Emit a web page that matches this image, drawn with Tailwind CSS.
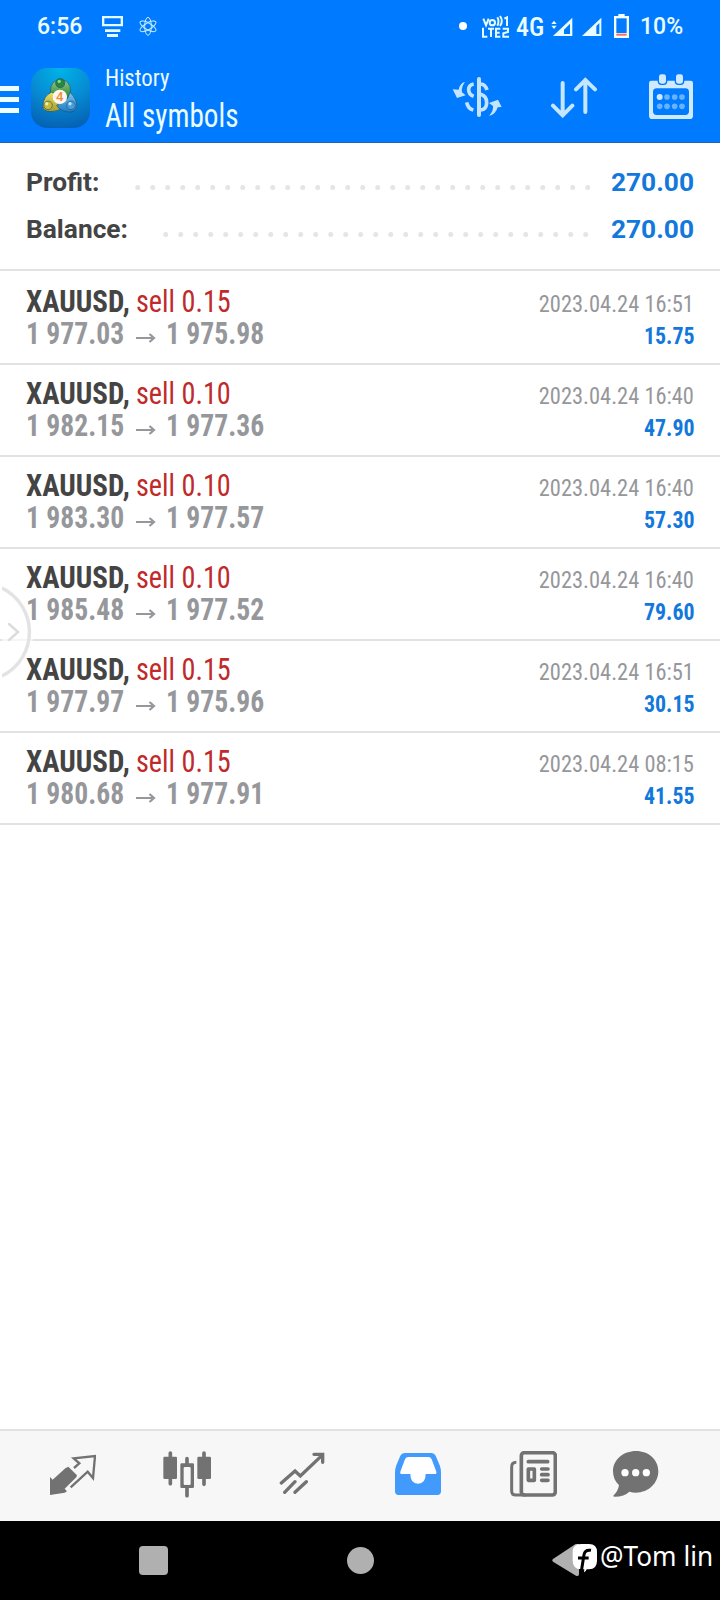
<!DOCTYPE html>
<html lang="en">
<head>
<meta charset="utf-8">
<title>History</title>
<script src="https://cdn.jsdelivr.net/npm/@tailwindcss/browser@4"></script>
</head>
<body class="bg-white">
<div class="relative flex h-[1600px] w-[720px] flex-col overflow-hidden bg-white font-['Roboto',sans-serif] text-[#444]">
  <header class="h-[143px] shrink-0 border-b border-[#1d63b8] bg-[#007aff] text-[#eafcff]">
    <div class="flex h-[54px] items-start">
      <span class="ml-[37px] mt-[11px] w-[65px] text-[23px] font-medium leading-[32px]">6:56</span>
      <svg class="mt-[16px] h-[21px] w-[21px]" viewBox="306 48 63 63" fill="#e4fbff"><path fill-rule="evenodd" d="M306 48h63v31h-63zM313 55v17h49V55z"/><path d="M315 88h46v8h-46zM321 102h33v9h-33z"/></svg>
      <svg class="ml-[16px] mt-[16px] h-[20px] w-[18px]" viewBox="417 48 54 60" fill="none" stroke="#c4edff" stroke-width="3"><ellipse cx="444" cy="79" rx="10" ry="27"/><ellipse cx="444" cy="79" rx="10" ry="27" transform="rotate(60 444 79)"/><ellipse cx="444" cy="79" rx="10" ry="27" transform="rotate(-60 444 79)"/></svg>
      <span class="ml-[302px] mt-[22px] h-2 w-2 rounded-full bg-white"></span>
      <svg class="ml-[15px] mt-[15px] h-[24px] w-[28px]" viewBox="126 45 84 72" fill="none" stroke="#e4fbff" stroke-width="6"><path d="M130 56l8 20 8-20M172 52q7 12 0 25M180 48q11 15 0 30M193 56l8-4v26M129 83v27h13M144 86h18M153 86v25M181 86h-13v24h13M168 98h11M188 86h16v10l-14 4v10h17"/><circle cx="157" cy="68" r="8"/></svg>
      <span class="ml-[6px] mt-[11px] w-[35px] text-[26px] font-medium font-stretch-condensed leading-[33px] whitespace-nowrap">4G</span>
      <svg class="mt-[17px] h-[20px] w-[52px]" viewBox="333 51 156 60" fill="#e9fcff"><path d="M342 62l8 10h-16zM334 77h16l-8 10z"/><path fill-rule="evenodd" d="M397 53v55h-58zM390 71l-18 18v13h18z"/><path fill-rule="evenodd" d="M484 53v55h-58zM478 69l-9 9v24h9z"/></svg>
      <svg class="ml-[11px] mt-[14px] h-[24px] w-[15px]" viewBox="522 42 45 72"><path d="M535 42h19v6h13v66h-45V48h13z" fill="#f4ffff"/><path d="M529 55h31v44h-31z" fill="#007aff"/><path d="M529 101h31v6h-31z" fill="#ff6a60"/></svg>
      <span class="ml-[11px] mt-[11px] text-[23px] font-medium leading-[32px]">10%</span>
    </div>
    <div class="flex h-[88px] items-start">
      <svg class="mt-[31px] h-[29px] w-[19px] shrink-0" viewBox="0 0 19 29" fill="#f0fdff"><path d="M0 1h19v5H0zM0 12h19v5H0zM0 23h19v5H0z"/></svg>
      <svg class="ml-[12px] mt-[14px] h-[60px] w-[59px] shrink-0" viewBox="0 0 180 183">
        <defs>
          <radialGradient id="bg" cx=".5" cy="0" r="1"><stop offset="0" stop-color="#00b4e8"/><stop offset=".55" stop-color="#078bd3"/><stop offset="1" stop-color="#0563b5"/></radialGradient>
          <linearGradient id="gr" x2="0" y2="1"><stop stop-color="#9bc98a"/><stop offset="1" stop-color="#23862f"/></linearGradient>
          <linearGradient id="ye" x2="0" y2="1"><stop stop-color="#eadf62"/><stop offset="1" stop-color="#a99c2a"/></linearGradient>
          <linearGradient id="bl" x2="0" y2="1"><stop stop-color="#7cc4ee"/><stop offset="1" stop-color="#1e7ac4"/></linearGradient>
        </defs>
        <rect width="180" height="183" rx="50" fill="url(#bg)"/>
        <g stroke="#14547c" stroke-width="2">
          <path d="M59 74q0-38 31-38t31 38v18H59z" fill="url(#gr)"/>
          <path d="M62 74q-25 12-26 43 0 16 25 16 20 0 35-12L78 78z" fill="url(#ye)"/>
          <path d="M119 74q21 20 21 43-4 20-28 17-23-3-34-20l34-22z" fill="url(#bl)"/>
          <circle cx="89" cy="46" r="14" fill="#27873a"/><circle cx="52" cy="114" r="13" fill="#c9bb35"/><circle cx="122" cy="114" r="13" fill="#4a9dd8"/>
        </g>
        <circle cx="86" cy="41" r="5" fill="#8fd68d"/><circle cx="48" cy="109" r="5" fill="#f4eea0"/><circle cx="119" cy="109" r="5" fill="#bde5fb"/>
        <circle cx="88" cy="88" r="22" fill="#fff7ee"/>
        <text x="88" y="102" text-anchor="middle" font-family="Roboto" font-size="40" font-weight="500" fill="#ee8b40">4</text>
      </svg>
      <div class="ml-[15px] mt-[8px] flex w-[347px] flex-col items-start font-stretch-condensed whitespace-nowrap">
        <span class="origin-left scale-x-[0.95] text-[24px] leading-[32px]">History</span>
        <span class="origin-left scale-x-[0.885] text-[33px] font-[450] leading-[43px]">All symbols</span>
      </div>
      <svg class="mt-[23px] h-[40px] w-[50px] shrink-0" viewBox="36 231 150 120" fill="none" stroke="#c4e3ff" stroke-width="9"><path d="M117 237v108" stroke-width="12" stroke-linecap="round"/><path d="M101 252q-15 3-15 17t15 20M80 307q4 19 20 23M122 252q14 1 19 18M122 283q18 5 18 25t-18 22" stroke-width="11"/><path d="M75 246q-15 3-19 23l-18-1 13 26 26-8-11-9q-3-15 9-31zM147 348q21-6 26-26l12-1-11-22-27 10 12 9q2 14-12 30z" fill="#c4e3ff" stroke="none"/></svg>
      <svg class="ml-[48px] mt-[23px] h-[41px] w-[48px] shrink-0" viewBox="330 231 144 123" fill="none" stroke="#c4e6ff" stroke-width="12" stroke-linecap="round"><path d="M368 249v97M339 317l29 29 29-29M436 336v-96M408 268l28-28 29 28"/></svg>
      <svg class="ml-[51px] mt-[20px] h-[45px] w-[44px] shrink-0" viewBox="627 222 132 135" fill="#cfe9ff"><path fill-rule="evenodd" d="M634 242h118q7 0 7 7v98q0 10-10 10H637q-10 0-10-10v-98q0-7 7-7zM650 265q-11 0-11 11v57q0 12 11 12h86q11 0 11-12v-57q0-11-11-11z"/><rect x="655" y="221" width="25" height="32" rx="9" stroke="#007aff" stroke-width="4"/><rect x="706" y="221" width="25" height="32" rx="9" stroke="#007aff" stroke-width="4"/><circle cx="659" cy="291" r="9"/><g fill="#66b3ff"><circle cx="681" cy="291" r="8.500"/><circle cx="704" cy="291" r="8.500"/><circle cx="726" cy="291" r="8.500"/><circle cx="659" cy="319" r="8.500"/><circle cx="681" cy="319" r="8.500"/><circle cx="704" cy="319" r="8.500"/><circle cx="726" cy="319" r="8.500"/></g></svg>
    </div>
  </header>

  <section class="flex h-[128px] shrink-0 flex-col border-b-2 border-[#e2e2e2] pl-[26px] pr-[26px] pt-[23px] text-[26.3px] font-bold leading-[32px]">
    <div class="flex h-[47px]"><span class="w-[109px]">Profit:</span><svg class="mt-[19px] h-[5px] w-[456px]" fill="none"><path d="M2.700 2.500H454" stroke="#e5e5e5" stroke-width="5" stroke-linecap="round" stroke-dasharray="0 15"/></svg><span class="ml-auto text-[#1278dc]">270.00</span></div>
    <div class="flex h-[47px]"><span class="w-[137px]">Balance:</span><svg class="mt-[19px] h-[5px] w-[428px]" fill="none"><path d="M2.700 2.500H424" stroke="#e5e5e5" stroke-width="5" stroke-linecap="round" stroke-dasharray="0 15"/></svg><span class="ml-auto text-[#1278dc]">270.00</span></div>
  </section>

  <main id="deals" class="flex-1 pt-0.5 font-stretch-condensed"></main>

  <nav class="flex h-[92px] shrink-0 items-start border-t-2 border-[#e2e2e2] bg-[#f7f7f7]">
    <svg class="ml-[49px] mt-[23px] h-[41px] w-[47px] shrink-0" viewBox="147 102 141 123" fill="#727272"><path d="M150 171l8 8 38-34 9-5 26 26-2 6-35 34 7 8-7 4-44 7z"/><path d="M222 144l16-14-17-15 64-7-6 66-16-19-51 47" fill="none" stroke="#727272" stroke-width="7"/></svg>
    <svg class="ml-[67px] mt-[20px] h-[47px] w-[48px] shrink-0" viewBox="490 93 144 141" fill="#727272"><rect x="491" y="110" width="41" height="67" rx="4"/><rect x="593" y="110" width="41" height="67" rx="4"/><path fill-rule="evenodd" d="M546 130h33q4 0 4 4v66q0 4-4 4h-33q-4 0-4-4v-66q0-4 4-4zM556 141q-4 0-4 4v46q0 4 4 4h13q4 0 4-4v-46q0-4-4-4z"/><path d="M512 99v92M613 99v94M562 116v18M562 200v27" stroke="#727272" stroke-width="11" stroke-linecap="round"/></svg>
    <svg class="ml-[68px] mt-[21px] h-[43px] w-[46px] shrink-0" viewBox="118 98 138 129" fill="none" stroke="#727272" stroke-width="10" stroke-linecap="round"><path d="M125 191l41-36 16 15 65-62M223 105h26v24M135 219l31-32M166 219l34-32"/></svg>
    <svg class="ml-[70px] mt-[22px] h-[42px] w-[46px] shrink-0" viewBox="463 99 138 126"><path fill="#429bfc" fill-rule="evenodd" d="M492 99h81q8 0 12 8l12 29q4 10 4 22v56q0 11-11 11H474q-11 0-11-11v-56q0-12 4-22l12-29q4-8 13-8z"/><path fill="#fff" d="M503 111h60q7 0 10 7l13 34q4 10-4 10h-27q0 29-23 29t-23-29h-25q-8 0-4-10l13-34q3-7 10-7z"/></svg>
    <svg class="ml-[69px] mt-[20px] h-[46px] w-[47px] shrink-0" viewBox="89 93 141 138" fill="none" stroke="#727272" stroke-width="11"><rect x="123" y="98" width="102" height="127" rx="9"/><path d="M108 127q-14 0-14 14v72q0 12 12 12h30" stroke-width="9"/><g stroke-linecap="round"><path d="M144 125h58M184 147h19M184 164h19M184 181h19"/></g><rect x="144" y="147" width="18" height="34" stroke-linejoin="round"/></svg>
    <svg class="ml-[56px] mt-[20px] h-[46px] w-[46px] shrink-0" viewBox="400 93 138 138"><path fill="#727272" d="M469 93c38 0 67 26 67 61s-29 64-67 64q-10 0-20-3-15 15-44 15-7 0-2-5 12-12 15-29-18-17-18-42c0-35 31-61 69-61z"/><g fill="#fff"><circle cx="436" cy="158" r="11"/><circle cx="468" cy="158" r="11"/><circle cx="500" cy="158" r="11"/></g></svg>
  </nav>

  <footer class="flex h-[79px] shrink-0 items-start bg-black text-white">
    <span class="ml-[139px] mt-[25px] h-[29px] w-[29px] rounded-[4px] bg-[#b0b0b0]"></span>
    <span class="ml-[179px] mt-[26px] h-[27px] w-[27px] rounded-full bg-[#b0b0b0]"></span>
    <svg class="ml-[177px] mt-[22px] h-[34px] w-[48px] shrink-0" viewBox="213 369 144 102"><path d="M219 417q-5 4 0 8l69 42q9 3 9-5v-90h-10z" fill="#b0b0b0"/><path d="M303 372h24q24 0 24 24v26q0 25-24 26h-7q-3 7-8 9l1-9h-10q-25-1-25-26v-26q0-24 25-24z" fill="#fff"/><path d="M333 391q-18-3-21 13l-8 50M294 414h32" fill="none" stroke="#000" stroke-width="9"/></svg>
    <span class="ml-[1px] mt-[17px] origin-left scale-x-[0.97] font-['Noto_Sans',sans-serif] text-[27px] leading-[36px] whitespace-nowrap">@Tom lin</span>
  </footer>

  <!-- edge panel handle -->
  <svg class="absolute left-[2px] top-[585px] h-[94px] w-[32px]" viewBox="0 0 32 94" fill="none" stroke-linecap="round"><path d="M0 3a46.500 46.500 0 0 1 0 88" fill="#fff" fill-opacity=".65"/><path d="M0 3a49 49 0 0 1 0 88" stroke="#e3e3e3" stroke-width="3.500" stroke-linecap="butt"/><path d="M7 39l9 8-9 8" stroke="#dcdcdc" stroke-width="2.500"/></svg>
</div>
<script>
const deals = [
  ["0.15", "1 977.03", "1 975.98", "2023.04.24 16:51", "15.75"],
  ["0.10", "1 982.15", "1 977.36", "2023.04.24 16:40", "47.90"],
  ["0.10", "1 983.30", "1 977.57", "2023.04.24 16:40", "57.30"],
  ["0.10", "1 985.48", "1 977.52", "2023.04.24 16:40", "79.60"],
  ["0.15", "1 977.97", "1 975.96", "2023.04.24 16:51", "30.15"],
  ["0.15", "1 980.68", "1 977.91", "2023.04.24 08:15", "41.55"],
];
document.getElementById("deals").innerHTML = deals.map(([lot, open, close, time, profit]) => `
  <div class="flex h-[92px] justify-between border-b-2 border-[#e2e2e2] pl-[26px] pr-[26px] pt-[13px] leading-[32px] whitespace-nowrap">
    <div class="flex flex-col text-[30.5px]">
      <div class="flex"><b class="w-[110px] origin-left scale-x-[0.95] font-bold">XAUUSD,</b><span class="origin-left scale-x-[0.925] text-[#c02a2a]">sell ${lot}</span></div>
      <div class="flex font-bold text-[#96979b]"><span class="w-[110px] origin-left scale-x-[0.905]">${open}</span><svg class="mt-[15px] h-[10px] w-[20px]" viewBox="0 0 20 10" fill="none" stroke="#96979b" stroke-width="2.200"><path d="M0 5h18M13.500 1l4.500 4-4.500 4"/></svg><span class="ml-[10px] origin-left scale-x-[0.905]">${close}</span></div>
    </div>
    <div class="flex flex-col items-end pt-[2px] text-[24px]">
      <span class="origin-right scale-x-[0.935] text-[#96979b]">${time}</span>
      <b class="origin-right scale-x-[0.91] font-bold text-[#1278dc]">${profit}</b>
    </div>
  </div>`).join("");
</script>
</body>
</html>
